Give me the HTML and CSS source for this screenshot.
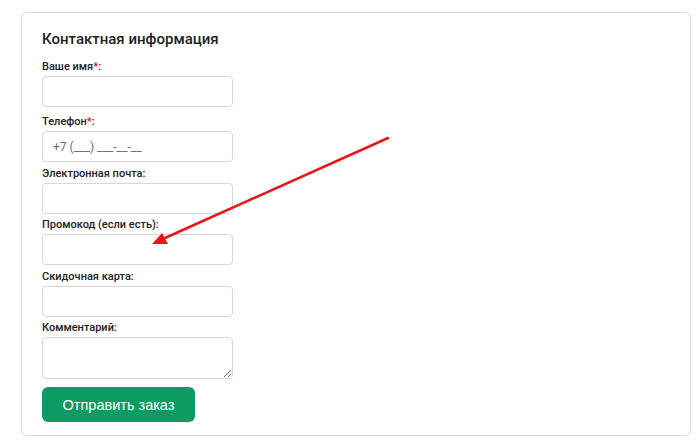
FILE: index.html
```html
<!DOCTYPE html>
<html lang="ru">
<head>
<meta charset="utf-8">
<link rel="stylesheet" href="styles.css">
</head>
<body>
<div class="card">
  <h2 class="title">Контактная информация</h2>
  <div class="field field-first">
    <label class="label">Ваше имя<span class="req">*</span>:</label>
    <input class="input" type="text">
  </div>
  <div class="field">
    <label class="label">Телефон<span class="req">*</span>:</label>
    <input class="input" type="text" placeholder="+7 (___) ___-__-__">
  </div>
  <div class="field">
    <label class="label">Электронная почта:</label>
    <input class="input" type="text">
  </div>
  <div class="field">
    <label class="label">Промокод (если есть):</label>
    <input class="input" type="text">
  </div>
  <div class="field">
    <label class="label">Скидочная карта:</label>
    <input class="input" type="text">
  </div>
  <div class="field">
    <label class="label">Комментарий:</label>
    <textarea class="textarea"></textarea>
  </div>
  <button class="btn" type="button">Отправить заказ</button>
  <svg class="arrow" width="700" height="442" viewBox="0 0 700 442">
    <line x1="388" y1="138" x2="165" y2="238" stroke="#e8161b" stroke-width="2.5" stroke-linecap="round"/>
    <polygon points="152,244 162,233 168,244" fill="#e8161b"/>
  </svg>
</div>
</body>
</html>
```
FILE: styles.css
```css
html, body {
  margin: 0;
  padding: 0;
  background: #fff;
}
body {
  padding: 12px 9px 6px 21px;
  font-family: "Liberation Sans", Arial, sans-serif;
  color: #222;
}
.card {
  position: relative;
  width: 628px;
  border: 1px solid #dcdcdc;
  border-radius: 5px;
  padding: 17px 20px 13px 20px;
  display: flex;
  flex-direction: column;
  align-items: flex-start;
}
.title {
  margin: 0 0 11px 0;
  font-family: Roboto, "Liberation Sans", sans-serif;
  font-weight: 500;
  font-size: 15px;
  line-height: 18px;
  color: #222;
}
.field {
  display: flex;
  flex-direction: column;
  margin-bottom: 3.5px;
}
.field-first {
  margin-bottom: 7px;
}
.label {
  font-family: Roboto, "Liberation Sans", sans-serif;
  font-size: 11px;
  font-weight: 500;
  color: #222;
  line-height: 16px;
  margin-bottom: 1px;
}
.req {
  color: #e5141b;
  font-weight: 700;
}
.input {
  box-sizing: border-box;
  width: 191px;
  height: 31px;
  border: 1px solid #d8d8d8;
  border-radius: 4px;
  padding: 0 10px;
  font-family: Roboto, "Liberation Sans", sans-serif;
  font-size: 12px;
  margin: 0;
  outline: none;
}
.input::placeholder {
  color: #6f6f6f;
}
.textarea {
  box-sizing: border-box;
  width: 191px;
  height: 42px;
  border: 1px solid #d8d8d8;
  border-radius: 4px;
  margin: 0;
  resize: vertical;
  outline: none;
}
.btn {
  margin-top: 4.5px;
  width: 153px;
  height: 35px;
  border: none;
  border-radius: 6px;
  background: #0e9a63;
  color: #fff;
  font-family: "Liberation Sans", Arial, sans-serif;
  font-size: 14.5px;
  padding: 0;
}
.arrow {
  position: absolute;
  left: -22px;
  top: -13px;
  pointer-events: none;
}
```
